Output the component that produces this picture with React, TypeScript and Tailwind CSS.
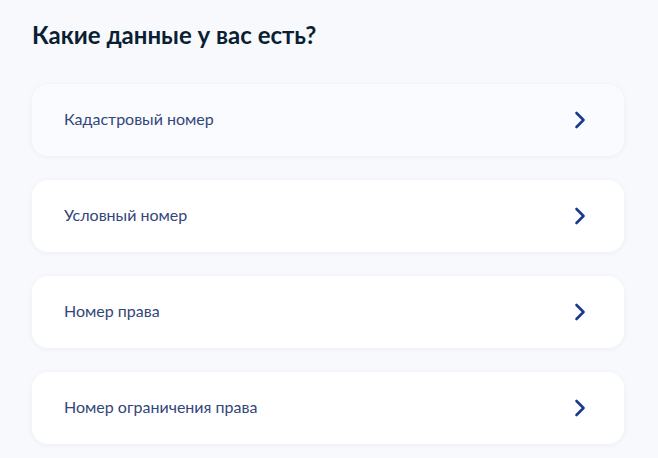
export default function App() {
  const items = [
    "Кадастровый номер",
    "Условный номер",
    "Номер права",
    "Номер ограничения права",
  ];
  return (
    <div className="min-h-[458px] bg-[#f7f9fc] px-8 pt-[19px] font-['Lato','Noto_Sans',sans-serif]">
      <h1 className="text-[24px] font-bold leading-[32px] text-[#0b1f33]">Какие данные у вас есть?</h1>
      <div className="mt-[33px] flex flex-col gap-6">
        {items.map((t, i) => (
          <button
            key={t}
            className={`flex h-[72px] w-[592px] items-center justify-between rounded-2xl pl-8 pr-[38px] text-left shadow-[0_1px_6px_rgba(11,31,51,0.05)] ${i === 0 ? "bg-[#f9fbff]" : "bg-white"}`}
          >
            <span className="-mt-[2px] text-[16px] leading-6 text-[#33467a]">{t}</span>
            <svg width="12" height="18" viewBox="0 0 12 18" fill="none">
              <path d="M2.5 2 L9.5 9 L2.5 16" stroke="#1c3a8c" strokeWidth="2.6" strokeLinecap="round" strokeLinejoin="round" />
            </svg>
          </button>
        ))}
      </div>
    </div>
  );
}
